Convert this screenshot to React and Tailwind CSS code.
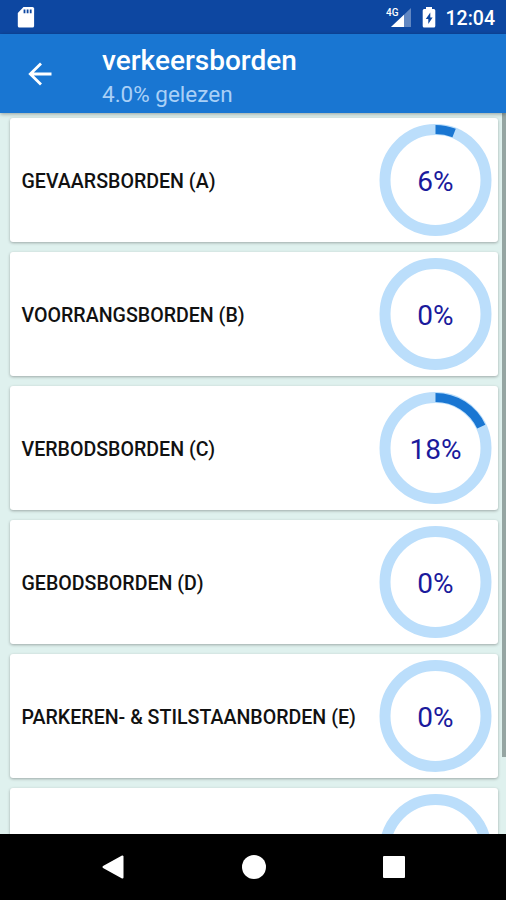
const categories = [
  { name: 'GEVAARSBORDEN (A)', percent: 6 },
  { name: 'VOORRANGSBORDEN (B)', percent: 0 },
  { name: 'VERBODSBORDEN (C)', percent: 18 },
  { name: 'GEBODSBORDEN (D)', percent: 0 },
  { name: 'PARKEREN- & STILSTAANBORDEN (E)', percent: 0 },
  { name: '', percent: null },
];

function StatusBar() {
  return (
    <div className="flex h-[34px] shrink-0 items-center bg-[#0d47a1] pl-[17px] pr-[11px] text-white">
      <svg className="h-[22px] w-[18px]" viewBox="0 0 18 22">
        <path fill="#fff" d="M6.5 1H15.5a1.6 1.6 0 0 1 1.6 1.6V19.9a1.6 1.6 0 0 1-1.6 1.6H2.4A1.6 1.6 0 0 1 .8 19.9V7z" />
        <path fill="#0d47a1" d="M6.6 3.6h1.8v3.6H6.6zM9.7 3.6h1.8v3.6H9.7zM12.8 3.6h1.8v3.6h-1.8z" />
      </svg>
      <svg className="ml-auto h-[24px] w-[27px]" viewBox="0 0 27 24">
        <path fill="#fff" opacity=".35" d="M25 3v19H5z" />
        <path fill="#fff" d="M18 9.65v12.35H5z" />
        <path fill="#0d47a1" d="M0 2h13v9.5H0z" />
        <text x="0" y="11" fill="#fff" fontSize="11.5" fontWeight="500" fontFamily="Roboto, sans-serif" textLength="12.5" lengthAdjust="spacingAndGlyphs">4G</text>
      </svg>
      <svg className="ml-[9px] h-[22px] w-[14px]" viewBox="0 0 14 22">
        <path fill="#fff" d="M4 1h6v2h1.8A1.5 1.5 0 0 1 13.3 4.5V20a1.5 1.5 0 0 1-1.5 1.5H2.2A1.5 1.5 0 0 1 .7 20V4.5A1.5 1.5 0 0 1 2.2 3H4z" />
        <path fill="#0d47a1" d="M8.3 6.5 3.8 13h2.5v5l4.3-6.6H8.3z" />
      </svg>
      <span className="ml-[10px] mt-[3px] text-[19.5px] font-medium leading-none">12:04</span>
    </div>
  );
}

function Header() {
  return (
    <header className="relative z-10 flex h-[79px] shrink-0 items-center bg-[#1976d2] pl-[28px] shadow-[0_1px_4px_rgba(0,0,0,0.35)]">
      <svg className="h-[24px] w-[24px]" viewBox="0 0 24 24" fill="none" stroke="#fff" strokeWidth="2.8">
        <path d="M23.5 12H3M13 1.5 2.3 12 13 22.5" />
      </svg>
      <div className="ml-[50px] pt-[8px]">
        <h1 className="text-[28px] font-medium leading-[34px] text-white">verkeersborden</h1>
        <p className="text-[22.5px] leading-[33px] text-[#a9d0f7]">4.0% gelezen</p>
      </div>
    </header>
  );
}

function ProgressRing({ percent }) {
  const length = 2 * Math.PI * 50.5;
  return (
    <div className="grid h-[112px] w-[112px] shrink-0 place-items-center">
      <svg className="col-start-1 row-start-1 h-[112px] w-[112px] -rotate-90 overflow-visible" viewBox="0 0 112 112" fill="none">
        <circle cx="56" cy="55.5" r="50.5" stroke="#bbdefb" strokeWidth="11" />
        {percent > 0 && (
          <circle
            cx="56"
            cy="55.5"
            r="50.5"
            stroke="#1976d2"
            strokeWidth="9"
            strokeDasharray={`${(length * percent) / 100} ${length}`}
          />
        )}
      </svg>
      {percent !== null && (
        <span className="col-start-1 row-start-1 pt-[5px] text-[28px] leading-none text-[#1a1a9c]">{percent}%</span>
      )}
    </div>
  );
}

function CategoryCard({ name, percent }) {
  return (
    <div className="flex h-[123.5px] shrink-0 items-center justify-between rounded-[3px] bg-white pl-[12px] pr-[6px] shadow-[0_1px_3px_rgba(0,0,0,0.3)]">
      <span className="whitespace-nowrap pt-[3px] text-[19.6px] font-medium text-[#111]">{name}</span>
      <ProgressRing percent={percent} />
    </div>
  );
}

function NavBar() {
  return (
    <nav className="flex h-[66.5px] shrink-0 items-center justify-between bg-black pl-[102px] pr-[101px]">
      <svg className="h-[24px] w-[22px]" viewBox="0 0 22 24">
        <path fill="#fff" stroke="#fff" strokeWidth="2" strokeLinejoin="round" d="M20.5 1.5v21L1.5 12z" />
      </svg>
      <div className="h-[24px] w-[24px] rounded-full bg-white" />
      <div className="h-[22px] w-[22px] rounded-[1px] bg-white" />
    </nav>
  );
}

export default function App() {
  return (
    <div className="flex h-[900px] w-[506px] flex-col overflow-hidden bg-[#dff1ee] font-['Roboto',sans-serif]">
      <StatusBar />
      <Header />
      <main className="flex min-h-0 flex-1 overflow-hidden">
        <div className="flex flex-1 flex-col gap-[10.5px] pl-[9.5px] pr-[4px] pt-[5px]">
          {categories.map((c, i) => (
            <CategoryCard key={i} name={c.name} percent={c.percent} />
          ))}
        </div>
        <div className="h-[644px] w-[4.5px] bg-[#95a5a2]" />
      </main>
      <NavBar />
    </div>
  );
}
